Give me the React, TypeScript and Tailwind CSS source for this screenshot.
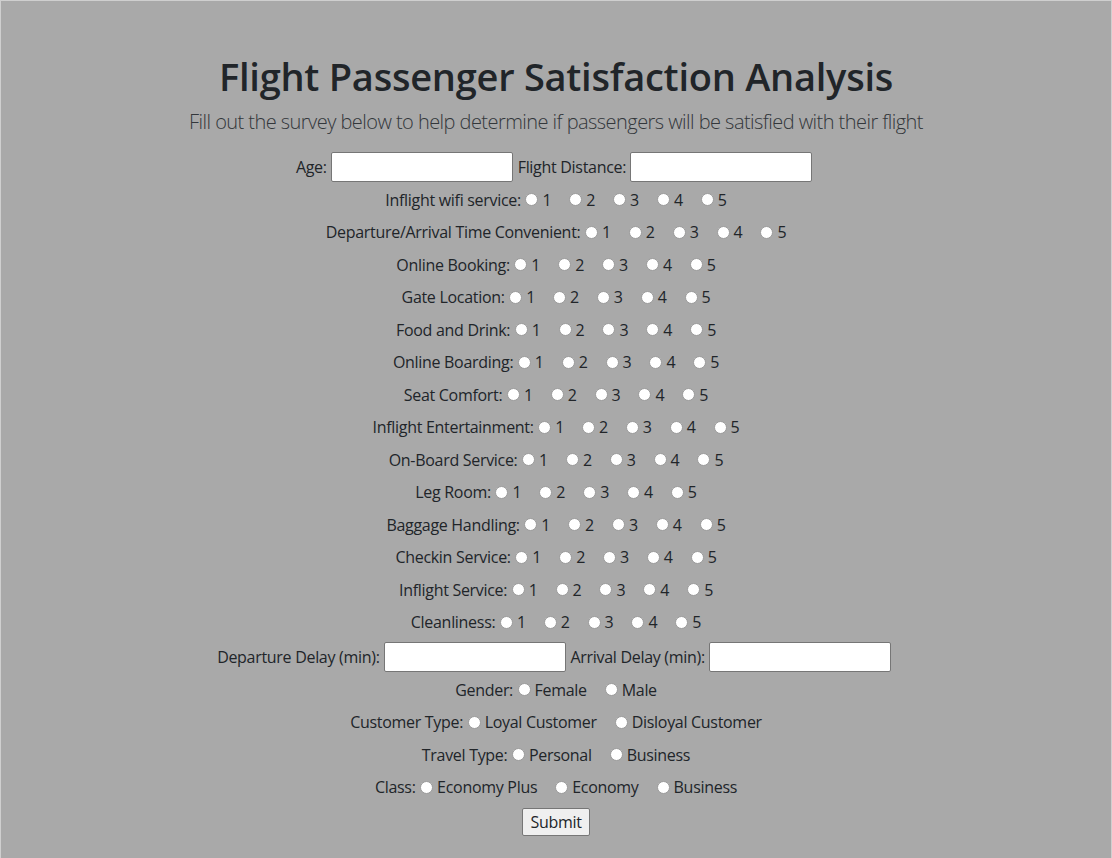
import React from "react";

const ratingRows = [
  "Inflight wifi service:",
  "Departure/Arrival Time Convenient:",
  "Online Booking:",
  "Gate Location:",
  "Food and Drink:",
  "Online Boarding:",
  "Seat Comfort:",
  "Inflight Entertainment:",
  "On-Board Service:",
  "Leg Room:",
  "Baggage Handling:",
  "Checkin Service:",
  "Inflight Service:",
  "Cleanliness:",
];

function Radio({ name, label }: { name: string; label: string }) {
  return (
    <>
      <input
        type="radio"
        name={name}
        className="appearance-none w-[13px] h-[13px] rounded-full bg-white border border-[#9a9a9a] ml-[4.5px] mr-[4px] shrink-0"
      />
      <span className="mr-[13.5px] last:mr-0">{label}</span>
    </>
  );
}

function RadioRow({ label, options }: { label: string; options: string[] }) {
  return (
    <div className="h-[32.5px] flex items-center justify-center">
      <span>{label}</span>
      {options.map((o, i) => (
        <Radio key={i} name={label} label={o} />
      ))}
    </div>
  );
}

function TextInput() {
  return (
    <input
      type="text"
      className="w-[182px] h-[30px] bg-white border border-[#767676] rounded-[2px] mx-[4px] px-1"
    />
  );
}

export default function App() {
  return (
    <div
      className="min-h-[858px] w-full bg-[#a9a9a9] text-[#212529] border-t border-l border-r border-[#cfcfcf]"
      style={{ fontFamily: '"Open Sans", "Noto Sans", sans-serif' }}
    >
      <div className="flex flex-col items-center pt-[48px] text-[16px] tracking-[-0.3px]">
        <h1 className="text-[38px] font-semibold leading-[54px] tracking-[-0.25px]">
          Flight Passenger Satisfaction Analysis
        </h1>
        <p className="text-[20px] font-light leading-[30px] mt-[4px] text-[#33373b] tracking-[-0.55px]">
          Fill out the survey below to help determine if passengers will be satisfied with their flight
        </p>
        <div className="mt-[14px] w-full flex flex-col">
          <div className="h-[32.5px] flex items-center justify-center">
            <span>Age:</span>
            <TextInput />
            <span className="ml-[1px]">Flight Distance:</span>
            <TextInput />
          </div>
          {ratingRows.map((r) => (
            <RadioRow key={r} label={r} options={["1", "2", "3", "4", "5"]} />
          ))}
          <div className="h-[33px] mt-[2px] flex items-center justify-center">
            <span>Departure Delay (min):</span>
            <TextInput />
            <span className="ml-[1px]">Arrival Delay (min):</span>
            <TextInput />
          </div>
          <RadioRow label="Gender:" options={["Female", "Male"]} />
          <RadioRow label="Customer Type:" options={["Loyal Customer", "Disloyal Customer"]} />
          <RadioRow label="Travel Type:" options={["Personal", "Business"]} />
          <RadioRow label="Class:" options={["Economy Plus", "Economy", "Business"]} />
          <div className="flex justify-center mt-[4px]">
            <button
              type="button"
              className="h-[28px] px-[7px] bg-[#efefef] border border-[#767676] rounded-[2px] text-[16px] leading-[24px]"
            >
              Submit
            </button>
          </div>
        </div>
      </div>
    </div>
  );
}
